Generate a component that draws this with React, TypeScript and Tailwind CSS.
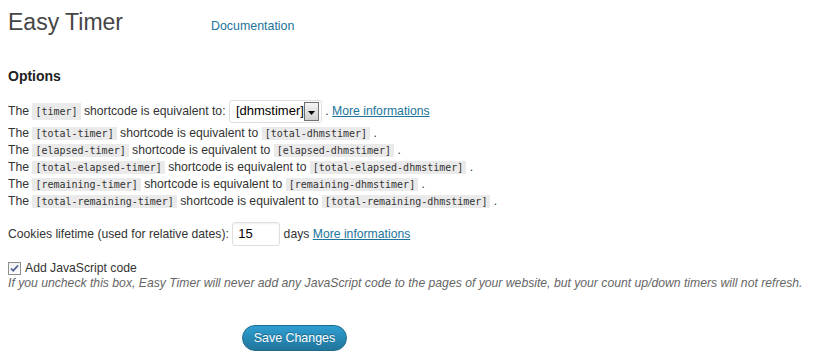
import React from 'react';

const Code: React.FC<{ children: React.ReactNode }> = ({ children }) => (
  <code className="bg-[#eaeaea] px-[3px] py-[1px] font-['DejaVu_Sans_Mono',monospace] text-[10px] text-[#333]">
    {children}
  </code>
);

const rows = [
  ['[total-timer]', '[total-dhmstimer]'],
  ['[elapsed-timer]', '[elapsed-dhmstimer]'],
  ['[total-elapsed-timer]', '[total-elapsed-dhmstimer]'],
  ['[remaining-timer]', '[remaining-dhmstimer]'],
  ['[total-remaining-timer]', '[total-remaining-dhmstimer]'],
];

const App: React.FC = () => {
  return (
    <div className="min-h-[360px] w-[840px] bg-white pl-2 font-['Liberation_Sans',Arial,sans-serif] text-[12.2px] text-[#333]">
      <div className="flex items-baseline pt-[8px]">
        <h2 className="text-[23px] leading-[29px] font-normal text-[#464646]">Easy Timer</h2>
        <a className="ml-[88px] text-[12.4px] text-[#21759b]">Documentation</a>
      </div>

      <h3 className="mt-[30px] text-[14px] leading-[18px] font-bold text-[#222]">Options</h3>

      <div className="mt-[14px] flex h-[24px] items-center whitespace-pre">
        <span>The </span>
        <Code>[timer]</Code>
        <span> shortcode is equivalent to: </span>
        <div className="flex h-[23px] w-[93px] items-center justify-between rounded-[3px] border border-[#dfdfdf] bg-white pl-[6px] pr-[2px]">
          <span className="text-[13px] text-black">[dhmstimer]</span>
          <span className="flex h-[19px] w-[17px] items-center justify-center border border-[#707070] bg-gradient-to-b from-[#f4f4f4] to-[#cfcfcf]">
            <svg width="7" height="4" viewBox="0 0 7 4" className="mt-[3px]">
              <path d="M0 0h7L3.5 4z" fill="#000" />
            </svg>
          </span>
        </div>
        <span> . </span>
        <a className="text-[#21759b] underline">More informations</a>
      </div>

      <div className="mt-[2px] leading-[17px]">
        {rows.map(([a, b]) => (
          <div key={a} className="whitespace-pre">
            The <Code>{a}</Code> shortcode is equivalent to <Code>{b}</Code> .
          </div>
        ))}
      </div>

      <div className="mt-[12px] flex h-[24px] items-center whitespace-pre">
        <span>Cookies lifetime (used for relative dates): </span>
        <div className="flex h-[24px] w-[48px] items-center rounded-[3px] border border-[#dfdfdf] bg-white pl-[5px] text-[13px] text-black shadow-[inset_0_1px_2px_rgba(0,0,0,0.07)]">
          15
        </div>
        <span> days </span>
        <a className="text-[#21759b] underline">More informations</a>
      </div>

      <div className="mt-[14px] flex h-[16px] items-center leading-[16px]">
        <span className="mr-[4px] flex h-[13px] w-[13px] items-center justify-center border border-[#8e8f8f] bg-gradient-to-b from-[#f0f0f0] to-[#fdfdfd]">
          <svg width="9" height="9" viewBox="0 0 9 9">
            <path d="M1 4.5l2.2 2.3L8 1.5" fill="none" stroke="#4a5f97" strokeWidth="1.8" />
          </svg>
        </span>
        <span>Add JavaScript code</span>
      </div>
      <p className="leading-[15px] italic text-[#666]">
        If you uncheck this box, Easy Timer will never add any JavaScript code to the pages of your website, but your count up/down timers will not refresh.
      </p>

      <div className="mt-[34px] pl-[234px]">
        <button className="h-[26px] w-[105px] rounded-full border border-[#1e6a8d] bg-gradient-to-b from-[#2e9fd2] to-[#21759b] text-[12.4px] text-white [text-shadow:0_-1px_0_rgba(0,0,0,0.3)]">
          Save Changes
        </button>
      </div>
    </div>
  );
};

export default App;
